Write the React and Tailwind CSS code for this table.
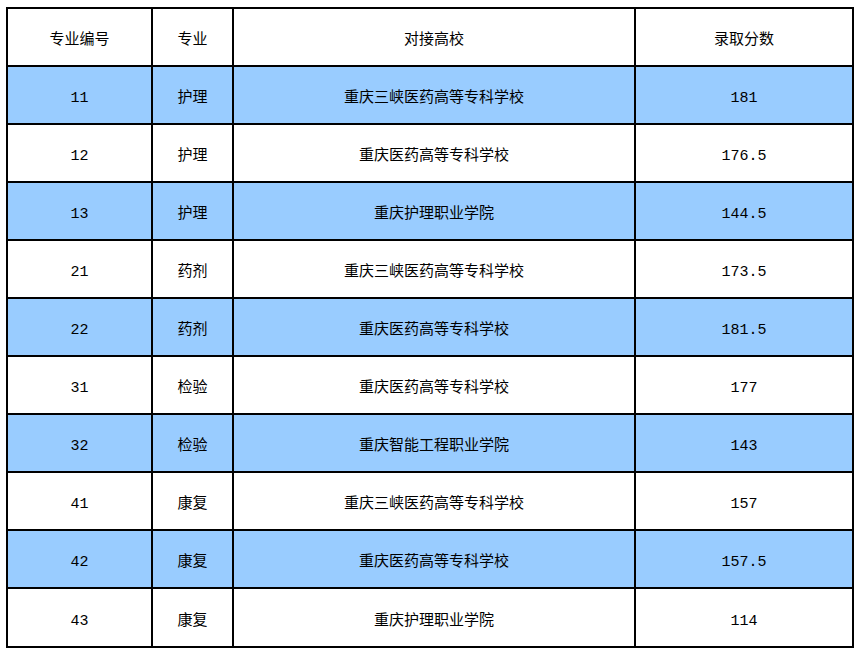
import React from "react";

const rows = [
    { code: "11", major: "护理", school: "重庆三峡医药高等专科学校", score: "181" },
    { code: "12", major: "护理", school: "重庆医药高等专科学校", score: "176.5" },
    { code: "13", major: "护理", school: "重庆护理职业学院", score: "144.5" },
    { code: "21", major: "药剂", school: "重庆三峡医药高等专科学校", score: "173.5" },
    { code: "22", major: "药剂", school: "重庆医药高等专科学校", score: "181.5" },
    { code: "31", major: "检验", school: "重庆医药高等专科学校", score: "177" },
    { code: "32", major: "检验", school: "重庆智能工程职业学院", score: "143" },
    { code: "41", major: "康复", school: "重庆三峡医药高等专科学校", score: "157" },
    { code: "42", major: "康复", school: "重庆医药高等专科学校", score: "157.5" },
    { code: "43", major: "康复", school: "重庆护理职业学院", score: "114" },
];

const font = { fontFamily: '"Liberation Mono", "Noto Sans CJK SC", monospace' };

export default function App() {
    const cell = "border-2 border-black text-center align-middle pt-[9px] text-[15px] text-black";
    return (
        <div className="bg-white w-[860px] h-[653px] pt-[7px] pl-[6px]" style={font}>
            <table className="border-collapse table-fixed w-[846px]">
                <colgroup>
                    <col className="w-[145px]" />
                    <col className="w-[81px]" />
                    <col className="w-[402px]" />
                    <col className="w-[218px]" />
                </colgroup>
                <thead>
                    <tr className="h-[58px] bg-white">
                        <th className={`${cell} font-normal`}>专业编号</th>
                        <th className={`${cell} font-normal`}>专业</th>
                        <th className={`${cell} font-normal`}>对接高校</th>
                        <th className={`${cell} font-normal`}>录取分数</th>
                    </tr>
                </thead>
                <tbody>
                    {rows.map((r, i) => (
                        <tr key={r.code} className={`${i === 9 ? "h-[59px]" : "h-[58px]"} ${i % 2 === 0 ? "bg-[#99ccff]" : "bg-white"}`}>
                            <td className={cell}>{r.code}</td>
                            <td className={cell}>{r.major}</td>
                            <td className={cell}>{r.school}</td>
                            <td className={cell}>{r.score}</td>
                        </tr>
                    ))}
                </tbody>
            </table>
        </div>
    );
}
